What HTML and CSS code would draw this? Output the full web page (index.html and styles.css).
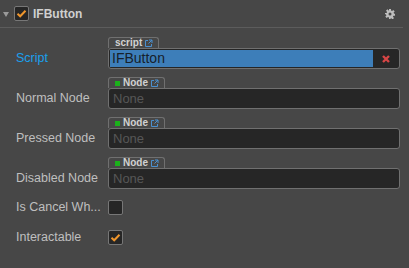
FILE: index.html
```html
<!DOCTYPE html>
<html lang="en">
<head>
    <meta charset="UTF-8">
    <meta name="viewport" content="width=device-width, initial-scale=1.0">
    <title>IFButton</title>
    <link rel="stylesheet" href="styles.css">
</head>
<body>
    <div class="comp-header">
        <svg class="fold" viewBox="0 0 6 5" width="6" height="5"><path d="M0 0H6L3 5z" fill="#9a9a9a"/></svg>
        <span class="check on">
            <svg viewBox="0 0 11 11" width="11" height="11"><path d="M1.5 5.8 L4.2 8.3 L9.5 2.8" fill="none" stroke="#f0962c" stroke-width="2"/></svg>
        </span>
        <span class="comp-title">IFButton</span>
        <svg class="gear" viewBox="0 0 10 10" width="10" height="10">
            <path d="M4 0h2v1.6l1.1.5 1.2-1.1 1.4 1.4-1.1 1.2.5 1.1H10v2H8.4l-.5 1.1 1.1 1.2-1.4 1.4-1.2-1.1-1.1.5V10H4V8.4l-1.1-.5-1.2 1.1-1.4-1.4 1.1-1.2-.5-1.1H0V4h1.6l.5-1.1L1 1.7 2.4.3l1.2 1.1L4 1.6z" fill="#bdbdbd"/>
            <circle cx="5" cy="5" r="1.5" fill="#474747"/>
        </svg>
    </div>

    <div class="props">
        <div class="prop">
            <div class="prop-name script-name">Script</div>
            <div class="prop-value">
                <div class="tab">script<svg class="link" viewBox="0 0 9 9" width="9" height="9"><path d="M4 1.5H1.5v6h6V5" fill="none" stroke="#4a90d0" stroke-width="1"/><path d="M5 1h3v3M8 1L4.5 4.5" fill="none" stroke="#4a90d0" stroke-width="1"/></svg></div>
                <div class="field">
                    <div class="fill">IFButton</div>
                    <svg class="clear" viewBox="0 0 10 10" width="10" height="10"><path d="M2 2L8 8M8 2L2 8" stroke="#d64545" stroke-width="2.4"/></svg>
                </div>
            </div>
        </div>

        <div class="prop">
            <div class="prop-name">Normal Node</div>
            <div class="prop-value">
                <div class="tab"><i class="dot"></i>Node<svg class="link" viewBox="0 0 9 9" width="9" height="9"><path d="M4 1.5H1.5v6h6V5" fill="none" stroke="#4a90d0" stroke-width="1"/><path d="M5 1h3v3M8 1L4.5 4.5" fill="none" stroke="#4a90d0" stroke-width="1"/></svg></div>
                <div class="field"><span class="none">None</span></div>
            </div>
        </div>

        <div class="prop">
            <div class="prop-name">Pressed Node</div>
            <div class="prop-value">
                <div class="tab"><i class="dot"></i>Node<svg class="link" viewBox="0 0 9 9" width="9" height="9"><path d="M4 1.5H1.5v6h6V5" fill="none" stroke="#4a90d0" stroke-width="1"/><path d="M5 1h3v3M8 1L4.5 4.5" fill="none" stroke="#4a90d0" stroke-width="1"/></svg></div>
                <div class="field"><span class="none">None</span></div>
            </div>
        </div>

        <div class="prop">
            <div class="prop-name">Disabled Node</div>
            <div class="prop-value">
                <div class="tab"><i class="dot"></i>Node<svg class="link" viewBox="0 0 9 9" width="9" height="9"><path d="M4 1.5H1.5v6h6V5" fill="none" stroke="#4a90d0" stroke-width="1"/><path d="M5 1h3v3M8 1L4.5 4.5" fill="none" stroke="#4a90d0" stroke-width="1"/></svg></div>
                <div class="field"><span class="none">None</span></div>
            </div>
        </div>

        <div class="bool">
            <div class="prop-name">Is Cancel Wh...</div>
            <span class="check"></span>
        </div>

        <div class="bool">
            <div class="prop-name">Interactable</div>
            <span class="check on">
                <svg viewBox="0 0 11 11" width="11" height="11"><path d="M1.5 5.8 L4.2 8.3 L9.5 2.8" fill="none" stroke="#f0962c" stroke-width="2"/></svg>
            </span>
        </div>
    </div>
</body>
</html>
```

FILE: styles.css
```css
body {
    margin: 0;
    background-color: #474747;
    font-family: "Liberation Sans", Arial, sans-serif;
    color: #bfbfbf;
}
.comp-header {
    display: flex;
    align-items: center;
    height: 27px;
    margin-right: 6px;
    border-bottom: 1px solid #5c5c5c;
}
.fold {
    margin: 1px 5px 0 3px;
}
.check {
    width: 15px;
    height: 15px;
    box-sizing: border-box;
    border: 1px solid #777;
    border-radius: 2px;
    background-color: #262626;
    display: flex;
    align-items: center;
    justify-content: center;
    flex-shrink: 0;
}
.comp-title {
    font-weight: bold;
    font-size: 12px;
    color: #d0d0d0;
    margin-left: 4px;
    flex: 1;
}
.gear {
    margin-right: 8px;
    margin-top: 1px;
}
.props {
    padding: 9px 9px 0 16px;
}
.prop {
    display: flex;
    align-items: flex-end;
    margin-bottom: 8px;
}
.prop-name {
    width: 92px;
    font-size: 12.5px;
    line-height: 21px;
    white-space: nowrap;
}
.script-name {
    color: #1aa0ee;
}
.prop-value {
    flex: 1;
    display: flex;
    flex-direction: column;
    align-items: flex-start;
}
.tab {
    display: flex;
    align-items: center;
    height: 11px;
    box-sizing: border-box;
    padding: 0 5px 0 6px;
    border: 1px solid #707070;
    border-bottom: none;
    border-radius: 3px 3px 0 0;
    font-size: 10px;
    font-weight: bold;
    color: #d2d2d2;
    line-height: 10px;
}
.dot {
    width: 5px;
    height: 5px;
    background-color: #1bb21b;
    margin-right: 3px;
}
.link {
    margin-left: 2px;
}
.field {
    align-self: stretch;
    display: flex;
    align-items: center;
    height: 21px;
    box-sizing: border-box;
    border: 1px solid #707070;
    border-radius: 3px;
    background-color: #262626;
    padding: 1px;
}
.fill {
    flex: 1;
    align-self: stretch;
    background-color: #3d7eb9;
    color: #17212b;
    font-size: 14px;
    line-height: 17px;
    padding-left: 2px;
    margin-right: 8px;
}
.clear {
    margin-right: 7px;
}
.none {
    font-size: 13px;
    color: #575757;
    padding-left: 3px;
}
.bool {
    display: flex;
    align-items: center;
    height: 21px;
    margin-bottom: 9px;
}
```
